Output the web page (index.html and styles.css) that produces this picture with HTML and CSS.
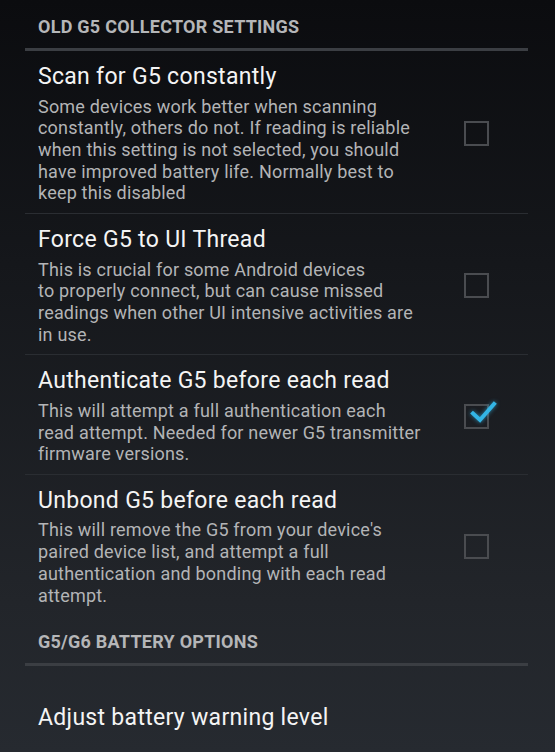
FILE: index.html
```html
<!DOCTYPE html>
<html>
<head>
<meta charset="utf-8">
<link rel="stylesheet" href="styles.css">
</head>
<body>
<div class="screen">
  <div class="list">
    <div class="cat">OLD G5 COLLECTOR SETTINGS</div>
    <div class="pref">
      <div class="text">
        <div class="title">Scan for G5 constantly</div>
        <div class="summary">Some devices work better when scanning<br>constantly, others do not. If reading is reliable<br>when this setting is not selected, you should<br>have improved battery life. Normally best to<br>keep this disabled</div>
      </div>
      <div class="box"></div>
    </div>
    <div class="pref">
      <div class="text">
        <div class="title">Force G5 to UI Thread</div>
        <div class="summary">This is crucial for some Android devices<br>to properly connect, but can cause missed<br>readings when other UI intensive activities are<br>in use.</div>
      </div>
      <div class="box"></div>
    </div>
    <div class="pref">
      <div class="text">
        <div class="title">Authenticate G5 before each read</div>
        <div class="summary">This will attempt a full authentication each<br>read attempt. Needed for newer G5 transmitter<br>firmware versions.</div>
      </div>
      <div class="box checked">
        <svg class="tick" width="30" height="30" viewBox="0 0 30 30"><path d="M6 13.5 L13 20 L27 4" fill="none" stroke="#33b5e5" stroke-width="4" stroke-linecap="square"/></svg>
      </div>
    </div>
    <div class="pref last">
      <div class="text">
        <div class="title">Unbond G5 before each read</div>
        <div class="summary">This will remove the G5 from your device's<br>paired device list, and attempt a full<br>authentication and bonding with each read<br>attempt.</div>
      </div>
      <div class="box"></div>
    </div>
    <div class="cat">G5/G6 BATTERY OPTIONS</div>
    <div class="pref single">
      <div class="text">
        <div class="title">Adjust battery warning level</div>
      </div>
    </div>
  </div>
</div>
</body>
</html>
```
FILE: styles.css
```css
html, body {
  margin: 0;
  padding: 0;
}
body {
  width: 555px;
  height: 752px;
  overflow: hidden;
  font-family: Roboto, "Noto Sans", sans-serif;
}
.screen {
  height: 752px;
  background: linear-gradient(to bottom, #0b0c0f 0%, #15171b 35%, #22252a 80%, #262a30 100%);
}
.list {
  padding: 0 27px 0 25px;
}
.cat {
  padding: 16px 0 10px 13px;
  font-size: 18px;
  line-height: 22px;
  letter-spacing: 0.25px;
  font-weight: bold;
  color: #b5b6b8;
  border-bottom: 3px solid #3b3e43;
}
.pref {
  display: flex;
  align-items: center;
  padding: 12px 0 9px 13px;
  border-bottom: 1px solid #2a2d32;
}
.pref.last {
  border-bottom: none;
}
.pref.single {
  border-bottom: none;
  padding-top: 38px;
}
.text {
  flex: 1;
}
.title {
  font-size: 23px;
  line-height: 28px;
  letter-spacing: 0.3px;
  color: #f4f4f4;
  white-space: nowrap;
}
.summary {
  margin-top: 4.5px;
  font-size: 18px;
  line-height: 21.7px;
  letter-spacing: 0.2px;
  color: #b3b4b6;
  white-space: nowrap;
}
.box {
  position: relative;
  width: 21px;
  height: 21px;
  border: 2px solid #4a4c50;
  margin-right: 39px;
  flex: none;
}
.tick {
  position: absolute;
  left: 1px;
  top: -6px;
  overflow: visible;
  filter: drop-shadow(0 0 2px rgba(51, 181, 229, 0.7));
}
```
